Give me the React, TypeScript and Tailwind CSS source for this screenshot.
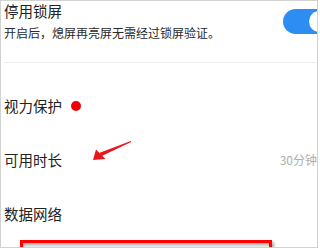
import React from "react";

const font = { fontFamily: '"Noto Sans CJK SC", "Noto Sans", sans-serif' };

// Red pointer arrow drawn over the screenshot
const Pointer = () => (
  <svg
    className="absolute left-[88px] top-[134px]"
    width="46"
    height="30"
    viewBox="0 0 46 30"
  >
    <polygon points="4,25 7,14.5 16.5,24" fill="#e8171c" />
    <polygon points="12.3,21.3 10.7,17.7 41.8,5.95 42.2,7.05" fill="#e8171c" />
  </svg>
);

const Row = ({ label, children }: { label: string; children?: React.ReactNode }) => (
  <div className="flex h-[54px] items-center justify-between pl-[3px]">
    <div className="flex items-center">
      <span className="text-[14.5px] leading-[20px] text-[#222]">{label}</span>
      {children}
    </div>
  </div>
);

export default function App() {
  return (
    <div className="h-[248px] w-[320px] bg-white" style={font}>
      <div className="relative h-[248px] w-[318px] overflow-hidden border border-[#d2d2d2] bg-white">
        {/* lock screen setting */}
        <div className="flex h-[61px] items-start">
          <div className="flex-1 pl-[3px]">
            <div className="text-[14.5px] leading-[20px] text-[#222]">停用锁屏</div>
            <div className="mt-[3px] text-[12px] leading-[18px] text-[#2a2a2a]">
              开启后，熄屏再亮屏无需经过锁屏验证。
            </div>
          </div>
          <div className="relative mr-[-16px] mt-[8px] h-[25px] w-[50px] shrink-0 rounded-full bg-[#2e8df2]">
            <div className="absolute left-[26px] top-[2px] h-[21px] w-[21px] rounded-full bg-white" />
          </div>
        </div>
        <div className="ml-[3px] mr-[1px] h-px bg-[#eeeeee]" />

        <div className="mt-[16px]">
          <Row label="视力保护">
            <span className="ml-[9px] h-[10px] w-[10px] rounded-full bg-[#f00000]" />
          </Row>
          <div className="flex h-[54px] items-center justify-between pl-[3px]">
            <span className="text-[14.5px] leading-[20px] text-[#222]">可用时长</span>
            <span className="text-[12px] leading-[18px] text-[#adadad]">30分钟</span>
          </div>
          <Row label="数据网络" />
        </div>

        <div className="ml-[19px] mt-[-1px] h-[40px] w-[252px] border-[3px] border-[#ff0000] bg-[#f2f2f2] shadow-[2px_2px_3px_rgba(0,0,0,0.35),inset_1px_2px_3px_rgba(0,0,0,0.3)]" />

        <Pointer />
      </div>
    </div>
  );
}
